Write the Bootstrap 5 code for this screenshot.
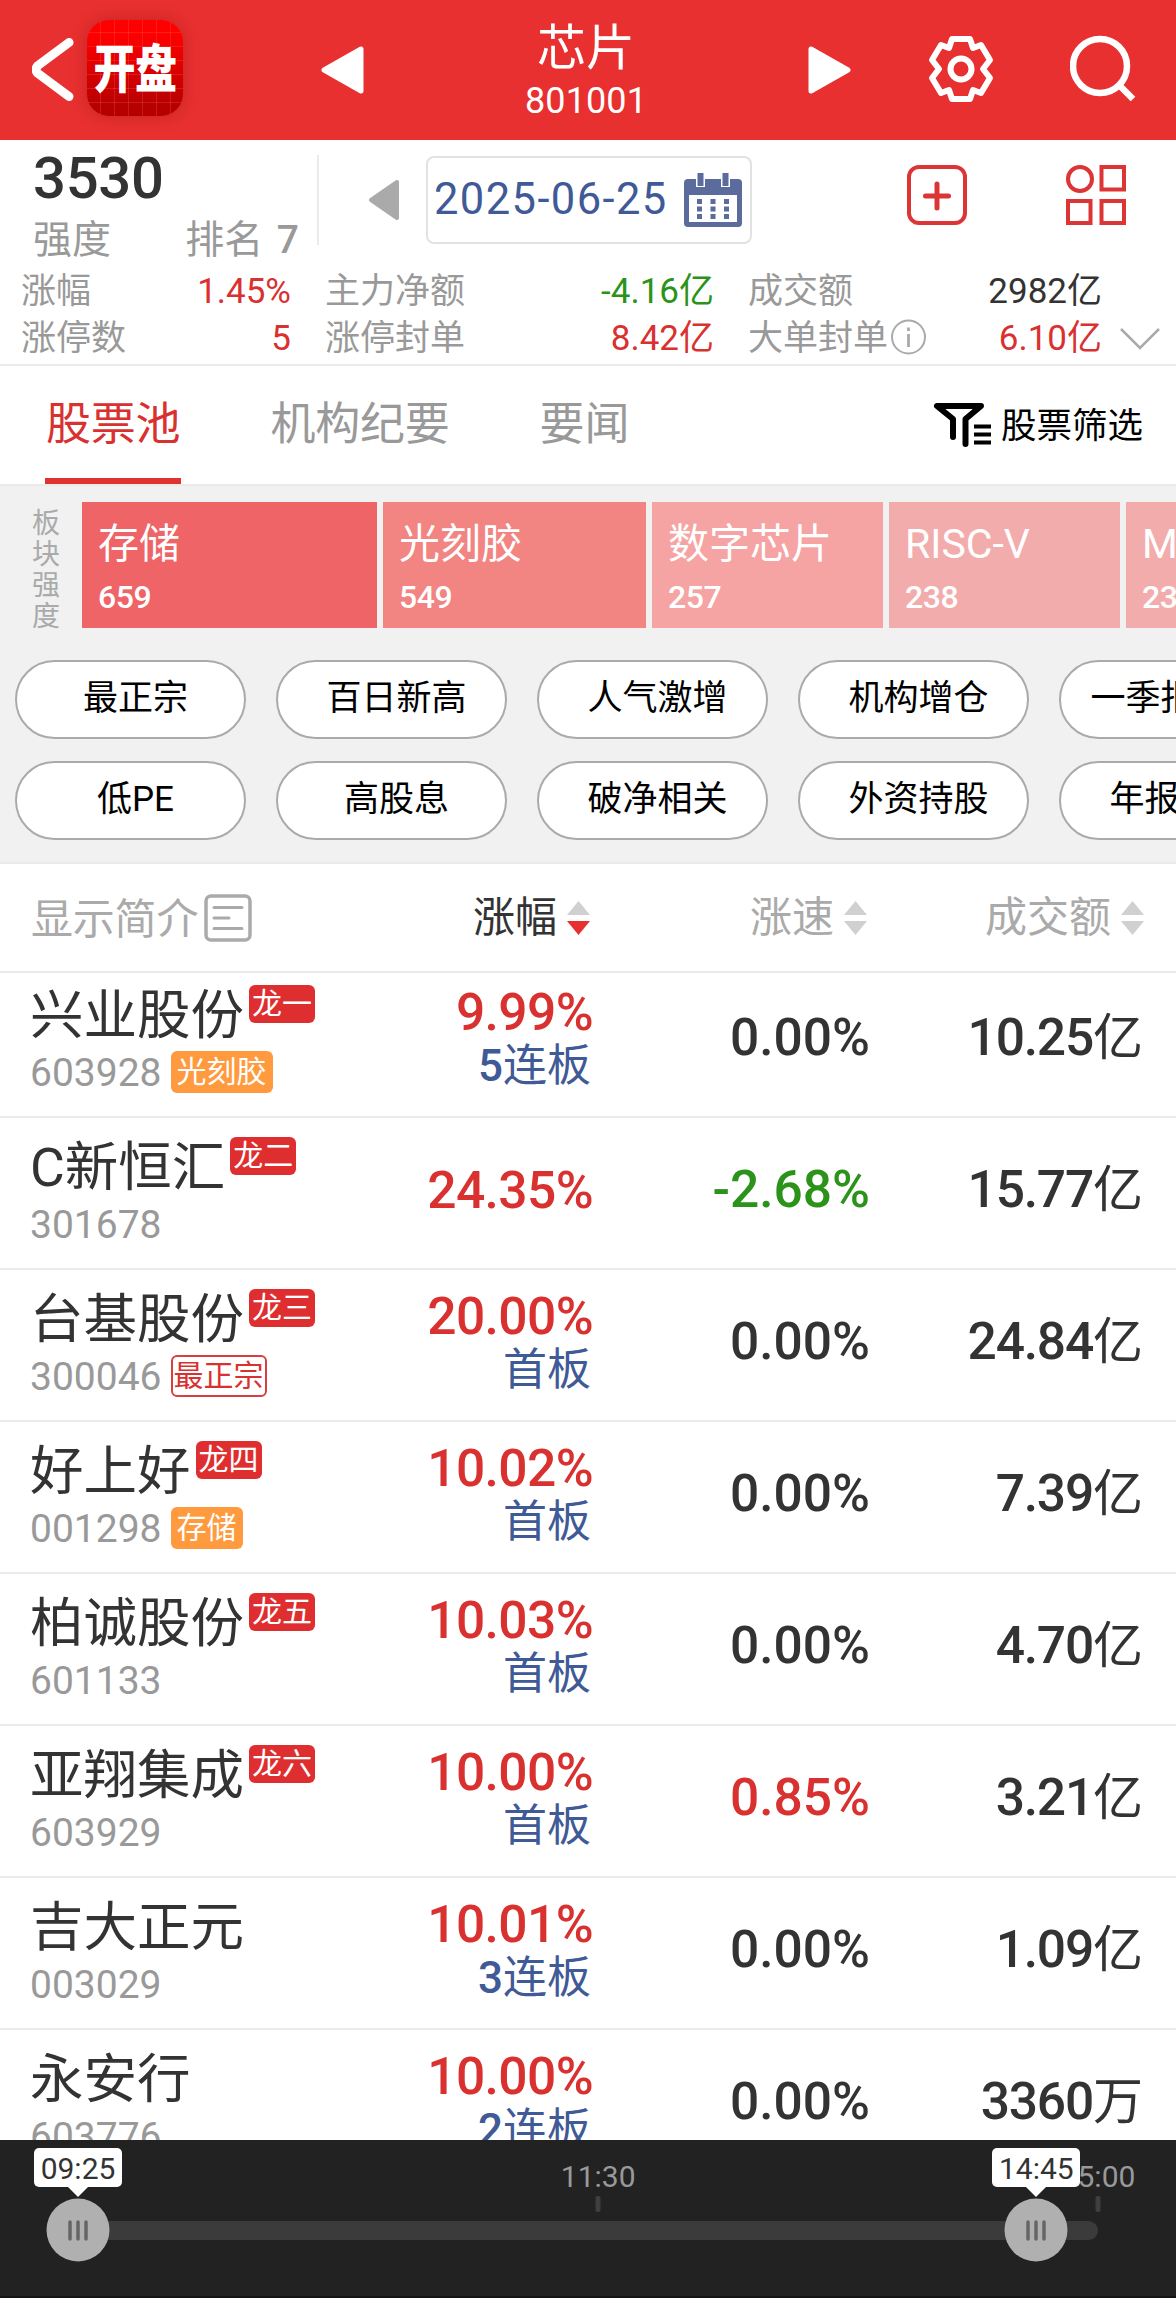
<!DOCTYPE html>
<html lang="zh-CN">
<head>
<meta charset="utf-8">
<meta name="viewport" content="width=device-width, initial-scale=1">
<title>芯片 801001</title>
<link rel="stylesheet" href="https://cdn.jsdelivr.net/npm/bootstrap@5.3.0/dist/css/bootstrap.min.css">
<style>
  :root { --up:#d93030; --down:#2b931a; --ink:#333; --mute:#999; --line:#ebebeb; --link:#3f5a96; }
  body { font-family: Roboto, "Noto Sans CJK SC", sans-serif; color: var(--ink); width:1176px; height:2298px; overflow:hidden; }
  svg { display:block; flex:none; }
  .up { color:var(--up); } .down { color:var(--down); } .mute { color:var(--mute); }

  .topbar { height:140px; background:#e83030; padding:0 40px 0 32px; }
  .applogo { width:96px; height:96px; margin:-4px 0 0 13px; border-radius:22px; box-shadow:0 0 16px rgba(120,0,0,.3);
    background:
      repeating-linear-gradient(90deg, transparent 0 13px, rgba(255,120,120,.22) 13px 14px),
      repeating-linear-gradient(0deg, transparent 0 13px, rgba(255,120,120,.22) 13px 14px),
      linear-gradient(#ff0000 15%, #b60000 90%); }
  .applogo span { font:900 42px/96px "Noto Sans CJK SC", sans-serif; transform:scaleY(1.25); display:block; color:#fff; letter-spacing:-.5px; margin-top:-3px; }
  .toptitle { width:440px; }
  .toptitle .tt { font-size:49px; line-height:56px; margin-top:5px; }
  .toptitle .tc { font-size:36px; line-height:48px; letter-spacing:.1px; }

  .summary { height:226px; border-bottom:2px solid var(--line); padding-top:15px; }
  .toprow { height:112px; }
  .strength { width:320px; padding-left:33px; }
  .strength .big { font-size:58px; font-weight:500; line-height:60px; margin-top:-7px; letter-spacing:-.3px; }
  .strength .sub { font-size:39px; line-height:48px; padding-right:21px; margin-top:8px; }
  .strength .sub b { font-weight:500; margin-left:4px; }
  .vline { width:2px; height:90px; background:var(--line); margin-left:-3px; }
  .datebox { width:326px; height:88px; border:2px solid #e2e2e2; border-radius:8px; padding:0 8px 0 6px; margin:1px 0 0 25px; }
  .datebox span { font-size:43.5px; color:var(--link); letter-spacing:1.4px; line-height:84px; }
  .statline { font-size:35px; line-height:47px; height:47px; padding-top:1px; }
  .statline > div { display:flex; justify-content:space-between; }
  .s1 { width:270px; margin-left:21px; } .s2 { width:389px; margin-left:34px; } .s3 { width:354px; margin-left:34px; }

  .tabbar { height:118px; padding:0 33px 0 45px; font-size:45px; }
  .tabbar .tb { line-height:118px; height:118px; color:var(--mute); letter-spacing:-.2px; padding:0; border:0; }
  .tabbar .tb.active { color:var(--up); border-bottom:6px solid #e03330; padding:0 1px; }
  .screen { font-size:35.5px; color:#000; }

  .pool { background:#f1f1f1; border-top:2px solid #eaeaea; border-bottom:2px solid #eaeaea; height:380px; padding-top:16px; overflow:hidden; }
  .vlabel { width:82px; font-size:28px; line-height:31px; color:#aaa; padding-left:32px; padding-top:6px; flex:none; height:126px; }
  .vlabel span { display:block; width:28px; }
  .sector { height:126px; padding:13px 16px; color:#fff; flex:none; }
  .sector .sn { font-size:41px; line-height:58px; white-space:nowrap; }
  .sector .sv { font-size:32px; line-height:48px; font-weight:500; letter-spacing:-.5px; }
  .pill { width:231px; height:79px; border:2px solid #aaa; background:#fff; color:#000; font-size:35px; line-height:74px; text-align:center; flex:none; white-space:nowrap; border-radius:40px; padding:0 0 0 10px; }
  .pill.nl { padding:0 0 0 7px; }

  .thead-row { height:109px; border-bottom:2px solid var(--line); font-size:42px; color:#aaa; line-height:109px; padding-left:31px; }
  .arrows { display:inline-flex; flex-direction:column; gap:6px; margin-left:10px; }

  .rows { height:1167px; overflow:hidden; }
  .rows .stock:first-child { margin-top:-7px; }
  .stock { height:152px; border-bottom:2px solid var(--line); }
  .c1 { width:372px; padding:21px 0 0 30px; }
  .c2 { width:221px; padding-bottom:4px; } .c3 { width:277px; padding-bottom:6px; } .c4 { width:273px; padding-bottom:6px; }
  .c2 .num, .c4 .num { letter-spacing:-.6px; }
  .c4 .num { letter-spacing:-1.2px; }
  .nm { font-size:53.5px; line-height:58px; height:58px; white-space:nowrap; }
  .rank { font-size:30px; line-height:38px; height:38px; background:#df2e30; color:#fff; border-radius:6px; padding:0 3px; margin:-2px 0 0 5px; }
  .cd { font-size:39px; height:42px; line-height:44px; color:var(--mute); margin-top:6px; letter-spacing:0; }
  .tg { font-size:30px; line-height:41px; height:42px; border-radius:6px; padding:0 6px; margin-left:9px; background:#ff9a3e; color:#fff; letter-spacing:0; }
  .tg.hollow { background:#fff; border:2px solid #d8403f; color:var(--up); line-height:37px; padding:0 1px; }
  .num { font-size:51.5px; font-weight:500; line-height:54px; white-space:nowrap; }
  .lk { font-size:44px; line-height:52px; color:var(--link); white-space:nowrap; padding-right:2px; }
  .lk b { font-weight:500; }
  .num i { font-style:normal; font-weight:400; font-size:50px; letter-spacing:0; }

  .player { height:158px; background:#222; border-bottom:2px solid #161216; }
  .scale { position:relative; width:1020px; height:158px; margin-left:78px; }
  .track { height:19px; background:#3b3b3b; border-radius:10px; }
  .tick { position:absolute; top:56px; width:5px; height:16px; border-radius:2px; background:#3f3f3f; transform:translateX(-50%); }
  .tlabel { position:absolute; top:19px; font-size:30px; line-height:36px; color:var(--mute); transform:translateX(-50%); }
  .knob { position:absolute; top:8px; width:88px; transform:translateX(-50%); }
  .tip { height:39px; width:88px; background:#fff; border-radius:5px; font-size:30px; line-height:41px; text-align:center; }
</style>
</head>
<body class="bg-white">

<header class="topbar d-flex align-items-center text-white">
  <svg width="42" height="64" viewBox="0 0 42 64"><path d="M37 5 6 28q-4 4 0 8L37 59" transform="translate(0 -.5)" fill="none" stroke="#fff" stroke-width="9" stroke-linecap="round" stroke-linejoin="round"/></svg>
  <div class="applogo text-center"><span>开盘</span></div>
  <svg class="ms-auto" width="46" height="50" viewBox="0 0 46 50"><path d="M4 25 41 4v42z" fill="#fff" stroke="#fff" stroke-width="5" stroke-linejoin="round"/></svg>
  <div class="toptitle text-center">
    <div class="tt">芯片</div>
    <div class="tc">801001</div>
  </div>
  <svg width="46" height="50" viewBox="0 0 46 50" style="margin-right:76px"><path d="M42 25 5 4v42z" fill="#fff" stroke="#fff" stroke-width="5" stroke-linejoin="round"/></svg>
  <svg width="66" height="68" viewBox="-33 -34 66 68" fill="none" stroke="#fff" stroke-width="6" stroke-linejoin="round" style="margin-top:-3px"><path d="M-9-30H9L12-21 20-24 29-9 22 0 29 9 20 24 12 21 9 30H-9L-12 21-20 24-29 9-22 0-29-9-20-24-12-21Z"/><circle r="10.500"/></svg>
  <svg width="66" height="66" viewBox="0 0 66 66" fill="none" stroke="#fff" stroke-width="6.500" style="margin:-5px 0 0 76px"><circle cx="30" cy="31" r="27"/><path d="M49 50 63 64"/></svg>
</header>

<section class="summary">
  <div class="toprow d-flex align-items-start">
    <div class="strength">
      <div class="big">3530</div>
      <div class="sub mute d-flex justify-content-between"><span>强度</span><span>排名 <b>7</b></span></div>
    </div>
    <div class="vline"></div>
    <svg width="33" height="42" viewBox="0 0 33 42" style="margin:24px 0 0 49px"><path d="M3 21 29 3v36z" fill="#aaa" stroke="#aaa" stroke-width="4" stroke-linejoin="round"/></svg>
    <div class="datebox d-flex align-items-center justify-content-between">
      <span>2025-06-25</span>
      <svg width="58" height="54" viewBox="0 0 58 54"><path fill="#5a6b9c" d="M4 6h50q4 0 4 4v40q0 4-4 4H4q-4 0-4-4V10q0-4 4-4"/><path fill="#fff" d="M5 22h48v27H5zM12 0h9v14h-9zM37 0h9v14h-9z"/><path fill="#5a6b9c" d="M13.500 0h6v13h-6zM38.500 0h6v13h-6zM13 26h5v5h-5zM26.500 26h5v5h-5zM40 26h5v5h-5zM13 33.500h5v5h-5zM26.500 33.500h5v5h-5zM40 33.500h5v5h-5zM13 41h5v5h-5zM26.500 41h5v5h-5zM40 41h5v5h-5z"/></svg>
    </div>
    <svg width="60" height="60" viewBox="0 0 60 60" fill="none" stroke="#dc3535" style="margin:10px 0 0 155px"><rect x="2" y="2" width="56" height="56" rx="10" stroke-width="4"/><path d="M30 19v24M18.500 31h23" stroke-width="5" stroke-linecap="round"/></svg>
    <svg width="60" height="60" viewBox="0 0 60 60" fill="none" stroke="#dc3535" stroke-width="4" style="margin:10px 0 0 99px"><circle cx="14" cy="14" r="12"/><rect x="35.500" y="2" width="22.500" height="22.500"/><rect x="2" y="36" width="22.500" height="22"/><rect x="35.500" y="36" width="22.500" height="22"/></svg>
  </div>
  <div class="statline d-flex">
    <div class="s1"><span class="mute">涨幅</span><span class="up">1.45%</span></div>
    <div class="s2"><span class="mute">主力净额</span><span class="down">-4.16亿</span></div>
    <div class="s3"><span class="mute">成交额</span><span>2982亿</span></div>
  </div>
  <div class="statline d-flex">
    <div class="s1"><span class="mute">涨停数</span><span class="up">5</span></div>
    <div class="s2"><span class="mute">涨停封单</span><span class="up">8.42亿</span></div>
    <div class="s3"><span class="mute d-flex align-items-center">大单封单<svg width="36" height="36" viewBox="0 0 36 36" fill="none" stroke="#aaa" stroke-width="2" style="margin:-3px 0 0 3px"><circle cx="17.500" cy="18" r="16.500"/><path d="M17.500 15v13M17.500 8.500v3.500" stroke-width="2.800"/></svg></span><span class="up">6.10亿</span></div>
    <svg width="40" height="24" viewBox="0 0 40 24" fill="none" stroke="#aaa" stroke-width="2.500" style="margin:12px 0 0 18px"><path d="M1 2 20 21 39 2"/></svg>
  </div>
</section>

<nav class="tabbar d-flex align-items-center">
  <div class="tb active">股票池</div>
  <div class="tb" style="margin-left:89px">机构纪要</div>
  <div class="tb" style="margin-left:90px">要闻</div>
  <div class="screen ms-auto d-flex align-items-center">
    <svg width="59" height="46" viewBox="0 0 59 46" fill="none" stroke="#000" stroke-width="6" stroke-linecap="round" stroke-linejoin="round" style="margin:0 9px 0 0"><path d="M20 35V17L4 4H48L32.500 17V42"/><path d="M41 24.500h17M41 32.500h17M41 40.500h17" stroke-width="4" stroke-linecap="butt"/></svg>
    <span class="pt-1">股票筛选</span>
  </div>
</nav>

<section class="pool">
  <div class="d-flex">
    <div class="vlabel"><span>板</span><span>块</span><span>强</span><span>度</span></div>
    <div class="d-flex" style="gap:6px">
      <div class="sector" style="width:295px;background:#ef6467"><div class="sn">存储</div><div class="sv">659</div></div>
      <div class="sector" style="width:263px;background:#f28482"><div class="sn">光刻胶</div><div class="sv">549</div></div>
      <div class="sector" style="width:231px;background:#f5a3a3"><div class="sn">数字芯片</div><div class="sv">257</div></div>
      <div class="sector" style="width:231px;background:#f3acac"><div class="sn">RISC-V</div><div class="sv">238</div></div>
      <div class="sector" style="width:231px;background:#f3acac"><div class="sn">MCU</div><div class="sv">237</div></div>
    </div>
  </div>
  <div class="d-flex" style="gap:30px;margin:32px 0 22px 15px">
    <div class="pill">最正宗</div><div class="pill">百日新高</div><div class="pill">人气激增</div><div class="pill">机构增仓</div><div class="pill nl">一季报预增</div>
  </div>
  <div class="d-flex" style="gap:30px;margin-left:15px">
    <div class="pill">低PE</div><div class="pill">高股息</div><div class="pill">破净相关</div><div class="pill">外资持股</div><div class="pill">年报预增</div>
  </div>
</section>

<div class="thead-row d-flex align-items-center">
  <span style="width:173px;letter-spacing:-.2px;padding-top:3px">显示简介</span>
  <svg width="48" height="48" viewBox="0 0 48 48" fill="none" stroke="#aaa" stroke-width="3"><rect x="2" y="2" width="44" height="44" rx="5" stroke-width="3.500"/><path d="M10 13.500h28M10 24h15M10 34.500h28" stroke-linecap="round"/></svg>
  <div class="d-flex align-items-center justify-content-end" style="width:338px;color:#333">涨幅<span class="arrows"><svg width="23" height="14"><path d="M0 14 11.500 0 23 14z" fill="#d0d0d0"/></svg><svg width="23" height="14"><path d="M0 0 11.500 14 23 0z" fill="#e83030"/></svg></span></div>
  <div class="d-flex align-items-center justify-content-end" style="width:277px">涨速<span class="arrows"><svg width="23" height="14"><path d="M0 14 11.500 0 23 14z" fill="#d0d0d0"/></svg><svg width="23" height="14"><path d="M0 0 11.500 14 23 0z" fill="#d0d0d0"/></svg></span></div>
  <div class="d-flex align-items-center justify-content-end" style="width:277px">成交额<span class="arrows"><svg width="23" height="14"><path d="M0 14 11.500 0 23 14z" fill="#d0d0d0"/></svg><svg width="23" height="14"><path d="M0 0 11.500 14 23 0z" fill="#d0d0d0"/></svg></span></div>
</div>

<main class="rows">
  <div class="stock d-flex">
    <div class="c1"><div class="nm d-flex align-items-start">兴业股份<span class="rank">龙一</span></div><div class="cd d-flex">603928<span class="tg">光刻胶</span></div></div>
    <div class="c2 d-flex flex-column justify-content-center align-items-end"><div class="num up">9.99%</div><div class="lk"><b>5</b>连板</div></div>
    <div class="c3 d-flex align-items-center justify-content-end"><div class="num">0.00%</div></div>
    <div class="c4 d-flex align-items-center justify-content-end"><div class="num">10.25<i>亿</i></div></div>
  </div>
  <div class="stock d-flex">
    <div class="c1"><div class="nm d-flex align-items-start">C新恒汇<span class="rank">龙二</span></div><div class="cd d-flex">301678</div></div>
    <div class="c2 d-flex flex-column justify-content-center align-items-end"><div class="num up">24.35%</div></div>
    <div class="c3 d-flex align-items-center justify-content-end"><div class="num down">-2.68%</div></div>
    <div class="c4 d-flex align-items-center justify-content-end"><div class="num">15.77<i>亿</i></div></div>
  </div>
  <div class="stock d-flex">
    <div class="c1"><div class="nm d-flex align-items-start">台基股份<span class="rank">龙三</span></div><div class="cd d-flex">300046<span class="tg hollow">最正宗</span></div></div>
    <div class="c2 d-flex flex-column justify-content-center align-items-end"><div class="num up">20.00%</div><div class="lk">首板</div></div>
    <div class="c3 d-flex align-items-center justify-content-end"><div class="num">0.00%</div></div>
    <div class="c4 d-flex align-items-center justify-content-end"><div class="num">24.84<i>亿</i></div></div>
  </div>
  <div class="stock d-flex">
    <div class="c1"><div class="nm d-flex align-items-start">好上好<span class="rank">龙四</span></div><div class="cd d-flex">001298<span class="tg">存储</span></div></div>
    <div class="c2 d-flex flex-column justify-content-center align-items-end"><div class="num up">10.02%</div><div class="lk">首板</div></div>
    <div class="c3 d-flex align-items-center justify-content-end"><div class="num">0.00%</div></div>
    <div class="c4 d-flex align-items-center justify-content-end"><div class="num">7.39<i>亿</i></div></div>
  </div>
  <div class="stock d-flex">
    <div class="c1"><div class="nm d-flex align-items-start">柏诚股份<span class="rank">龙五</span></div><div class="cd d-flex">601133</div></div>
    <div class="c2 d-flex flex-column justify-content-center align-items-end"><div class="num up">10.03%</div><div class="lk">首板</div></div>
    <div class="c3 d-flex align-items-center justify-content-end"><div class="num">0.00%</div></div>
    <div class="c4 d-flex align-items-center justify-content-end"><div class="num">4.70<i>亿</i></div></div>
  </div>
  <div class="stock d-flex">
    <div class="c1"><div class="nm d-flex align-items-start">亚翔集成<span class="rank">龙六</span></div><div class="cd d-flex">603929</div></div>
    <div class="c2 d-flex flex-column justify-content-center align-items-end"><div class="num up">10.00%</div><div class="lk">首板</div></div>
    <div class="c3 d-flex align-items-center justify-content-end"><div class="num up">0.85%</div></div>
    <div class="c4 d-flex align-items-center justify-content-end"><div class="num">3.21<i>亿</i></div></div>
  </div>
  <div class="stock d-flex">
    <div class="c1"><div class="nm d-flex align-items-start">吉大正元</div><div class="cd d-flex">003029</div></div>
    <div class="c2 d-flex flex-column justify-content-center align-items-end"><div class="num up">10.01%</div><div class="lk"><b>3</b>连板</div></div>
    <div class="c3 d-flex align-items-center justify-content-end"><div class="num">0.00%</div></div>
    <div class="c4 d-flex align-items-center justify-content-end"><div class="num">1.09<i>亿</i></div></div>
  </div>
  <div class="stock d-flex">
    <div class="c1"><div class="nm d-flex align-items-start">永安行</div><div class="cd d-flex">603776</div></div>
    <div class="c2 d-flex flex-column justify-content-center align-items-end"><div class="num up">10.00%</div><div class="lk"><b>2</b>连板</div></div>
    <div class="c3 d-flex align-items-center justify-content-end"><div class="num">0.00%</div></div>
    <div class="c4 d-flex align-items-center justify-content-end"><div class="num">3360<i>万</i></div></div>
  </div>
</main>

<footer class="player">
  <div class="scale pt-1">
    <div class="track" style="margin-top:77px"></div>
    <span class="tlabel" style="left:51%">11:30</span><span class="tick" style="left:51%"></span>
    <span class="tlabel" style="left:100%">15:00</span><span class="tick" style="left:100%"></span>
    <div class="knob" style="left:0%">
      <div class="tip">09:25</div>
      <svg width="88" height="78" viewBox="0 0 88 78"><path d="M34 0h20L44 10z" fill="#fff"/><circle cx="44" cy="43" r="31.500" fill="#b0b0b0"/><path d="M36 35v17M44 35v17M52 35v17" stroke="#666" stroke-width="3.500" stroke-linecap="round"/></svg>
    </div>
    <div class="knob" style="left:93.95%">
      <div class="tip">14:45</div>
      <svg width="88" height="78" viewBox="0 0 88 78"><path d="M34 0h20L44 10z" fill="#fff"/><circle cx="44" cy="43" r="31.500" fill="#b0b0b0"/><path d="M36 35v17M44 35v17M52 35v17" stroke="#666" stroke-width="3.500" stroke-linecap="round"/></svg>
    </div>
  </div>
</footer>
<script src="https://cdn.jsdelivr.net/npm/bootstrap@5.3.0/dist/js/bootstrap.bundle.min.js"></script>
</body>
</html>
